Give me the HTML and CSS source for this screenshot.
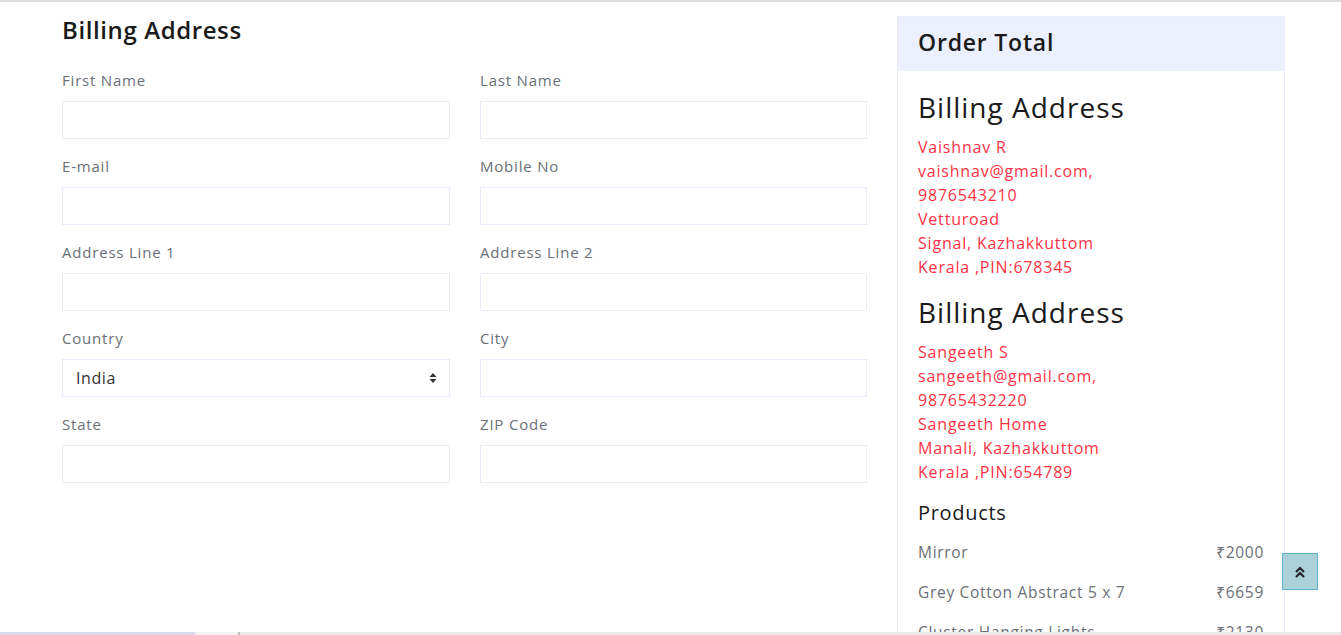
FILE: index.html
```html
<!DOCTYPE html>
<html lang="en">
<head>
<meta charset="utf-8">
<title>Checkout</title>
<link rel="stylesheet" href="styles.css">
</head>
<body>
<div class="page">
  <section class="form-col">
    <h3 class="form-title">Billing Address</h3>
    <div class="form-grid">
      <div class="field"><label>First Name</label><input type="text"></div>
      <div class="field"><label>Last Name</label><input type="text"></div>
      <div class="field"><label>E-mail</label><input type="text"></div>
      <div class="field"><label>Mobile No</label><input type="text"></div>
      <div class="field"><label>Address Line 1</label><input type="text"></div>
      <div class="field"><label>Address Line 2</label><input type="text"></div>
      <div class="field"><label>Country</label>
        <div class="select"><span>India</span>
          <svg class="sel-arrows" width="8" height="12" viewBox="0 0 8 12"><path d="M4 1 L7.5 5 H0.5 Z M4 11 L7.5 7 H0.5 Z" fill="#333"/></svg>
        </div>
      </div>
      <div class="field"><label>City</label><input type="text"></div>
      <div class="field"><label>State</label><input type="text"></div>
      <div class="field"><label>ZIP Code</label><input type="text"></div>
    </div>
  </section>
  <aside class="card">
    <div class="card-head">Order Total</div>
    <div class="card-body">
      <h4 class="addr-title">Billing Address</h4>
      <div class="addr">
        <div>Vaishnav R</div>
        <div>vaishnav@gmail.com,</div>
        <div>9876543210</div>
        <div>Vetturoad</div>
        <div>Signal, Kazhakkuttom</div>
        <div>Kerala ,PIN:678345</div>
      </div>
      <h4 class="addr-title second">Billing Address</h4>
      <div class="addr">
        <div>Sangeeth S</div>
        <div>sangeeth@gmail.com,</div>
        <div>98765432220</div>
        <div>Sangeeth Home</div>
        <div>Manali, Kazhakkuttom</div>
        <div>Kerala ,PIN:654789</div>
      </div>
      <h5 class="prod-title">Products</h5>
      <div class="prod"><span>Mirror</span><span>₹2000</span></div>
      <div class="prod"><span>Grey Cotton Abstract 5 x 7</span><span>₹6659</span></div>
      <div class="prod"><span>Cluster Hanging Lights</span><span>₹2130</span></div>
      <div class="prod"><span>Wall Clock</span><span>₹1200</span></div>
    </div>
  </aside>
</div>
<a class="to-top" href="#">
  <svg width="12" height="14" viewBox="0 0 12 14"><path d="M2 7 L6 3 L10 7 M2 12 L6 8 L10 12" fill="none" stroke="#222" stroke-width="2.2"/></svg>
</a>
<div class="hscroll"><span class="hs-a"></span><span class="hs-b"></span><span class="hs-c"></span><span class="hs-d"></span></div>
</body>
</html>
```

FILE: styles.css
```css
html, body {
  margin: 0;
  padding: 0;
  background: #fff;
  height: 100%;
  overflow: hidden;
}
body {
  font-family: "Open Sans", "Noto Sans", sans-serif;
  color: #212529;
  border-top: 2px solid #dcdcdc;
  box-sizing: border-box;
}
.page {
  display: flex;
  align-items: flex-start;
  gap: 30px;
  padding: 14px 0 0 62px;
}
.form-col {
  width: 805px;
}
.form-title {
  margin: 0 0 24px;
  font-size: 24px;
  line-height: 28px;
  font-weight: 600;
  letter-spacing: 0.6px;
  color: #1a1a1a;
}
.form-grid {
  display: grid;
  grid-template-columns: 388px 387px;
  column-gap: 30px;
}
.field {
  display: flex;
  flex-direction: column;
  margin-bottom: 15px;
}
.field label {
  font-size: 15px;
  line-height: 24px;
  letter-spacing: 0.8px;
  color: #6a7078;
  margin-bottom: 9px;
}
.field input, .select {
  height: 38px;
  box-sizing: border-box;
  border: 1px solid #e8ebfb;
  background: #fff;
  margin: 0;
  padding: 0 12px;
  font: inherit;
}
.select {
  display: flex;
  align-items: center;
  justify-content: space-between;
  font-size: 16px;
  letter-spacing: 0.6px;
  color: #333;
  padding: 0 12px 0 13px;
}
.card {
  width: 388px;
  box-sizing: border-box;
  border: 1px solid #ebebfb;
  flex: none;
}
.card-head {
  background: #ebeffe;
  height: 54px;
  display: flex;
  align-items: center;
  padding: 0 20px 4px;
  box-sizing: border-box;
  font-size: 23px;
  font-weight: 600;
  letter-spacing: 0.8px;
  color: #1a1a1a;
}
.card-body {
  padding: 19px 20px 0;
}
.addr-title {
  margin: 0 0 11px;
  font-size: 28px;
  line-height: 34px;
  font-weight: 500;
  letter-spacing: 1px;
  color: #1a1a1a;
}
.addr-title.second {
  margin-top: 16px;
}
.addr {
  color: #ff3245;
  font-size: 16px;
  line-height: 24px;
  letter-spacing: 0.8px;
}
.prod-title {
  margin: 17px 0 15px;
  font-size: 20px;
  line-height: 24px;
  font-weight: 500;
  letter-spacing: 0.7px;
  color: #1a1a1a;
}
.prod {
  display: flex;
  justify-content: space-between;
  font-size: 15.5px;
  line-height: 24px;
  letter-spacing: 0.7px;
  color: #6a7078;
  margin-bottom: 16px;
}
.to-top {
  position: fixed;
  right: 23px;
  bottom: 45px;
  width: 36px;
  height: 37px;
  box-sizing: border-box;
  background: #acd0d9;
  border: 1px solid #5fb3c8;
  display: flex;
  align-items: center;
  justify-content: center;
}
.hscroll {
  position: fixed;
  left: 0;
  right: 0;
  bottom: 0;
  height: 3px;
  display: flex;
  background: #ebebeb;
}
.hs-a { width: 195px; background: #d9d9ea; }
.hs-b { width: 43px; background: #f2f2f4; }
.hs-c { width: 2px; background: #bcbcbc; }
.hs-d { flex: 1; background: #ebebeb; }
```
